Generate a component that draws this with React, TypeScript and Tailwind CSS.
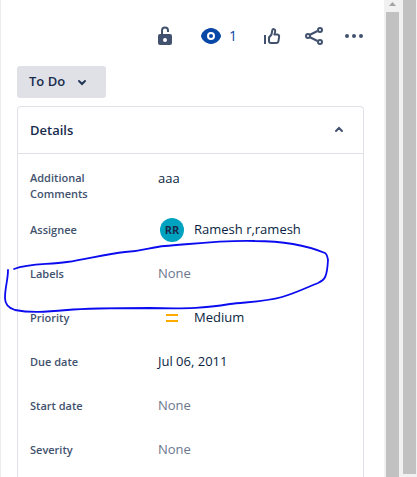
import type { ReactNode } from "react";

const Unlocked = () => (
  <svg viewBox="0 0 24 24" className="size-6 shrink-0" fill="none">
    <path d="M10 11V6.500a3 3 0 0 1 6 0V8" stroke="#42526e" strokeWidth="2" />
    <path
      fillRule="evenodd"
      fill="#42526e"
      d="M8 10h10a2 2 0 0 1 2 2v7a2 2 0 0 1-2 2H8a2 2 0 0 1-2-2v-7a2 2 0 0 1 2-2Zm5 4a2 2 0 1 0 0 4 2 2 0 0 0 0-4Z"
    />
  </svg>
);

const Eye = () => (
  <svg viewBox="0 0 24 24" className="size-6 shrink-0">
    <path d="M12 4C6.500 4 2 9.500 2 12s4.500 8 10 8 10-5.500 10-8-4.500-8-10-8Z" fill="#0747a6" />
    <circle cx="12" cy="12" r="3" fill="none" stroke="#fff" strokeWidth="2" />
  </svg>
);

const ThumbUp = () => (
  <svg viewBox="0 0 24 24" className="size-6" fill="none" stroke="#42526e" strokeWidth="2" strokeLinejoin="round">
    <path d="M5 11v9" />
    <path d="M9 17V13.500L11.500 10.500l.8-4.200c.4-1.800 2.900-1.500 2.900.5 0 1-.3 2.200-.8 3.700H17c1.600 0 2.300 1 2.100 2.400l-.6 4c-.2 1.400-1.100 2.100-2.300 2.100H11c-1.200 0-2-.8-2-2Z" />
  </svg>
);

const Share = () => (
  <svg viewBox="0 0 24 24" className="size-6" fill="none" stroke="#42526e" strokeWidth="2">
    <path d="m7.500 11 8-4M7.500 13l8 4" />
    <circle cx="6" cy="12" r="2" />
    <circle cx="18" cy="6" r="2" />
    <circle cx="18" cy="18" r="2" />
  </svg>
);

const More = () => (
  <svg viewBox="0 0 20 24" className="h-6 w-5" fill="#42526e">
    <circle cx="3" cy="12" r="2" />
    <circle cx="10" cy="12" r="2" />
    <circle cx="17" cy="12" r="2" />
  </svg>
);

const Toolbar = () => (
  <div className="flex items-center justify-end gap-[18px]">
    <button aria-label="Unlocked">
      <Unlocked />
    </button>
    <button aria-label="Watchers" className="flex w-12 items-center justify-center gap-1.5 text-sm text-[#0747a6]">
      <Eye />
      <span>1</span>
    </button>
    <button aria-label="Vote">
      <ThumbUp />
    </button>
    <button aria-label="Share">
      <Share />
    </button>
    <button aria-label="More actions">
      <More />
    </button>
  </div>
);

const Field = ({ label, children }: { label: string; children: ReactNode }) => (
  <div className="flex min-h-9 items-center">
    <dt className="w-32 shrink-0 pr-8 text-[11px] leading-4 font-semibold text-[#42526e]">{label}</dt>
    <dd className="min-w-0 flex-1 self-stretch">{children}</dd>
  </div>
);

const Value = ({ children }: { children: ReactNode }) => (
  <div className="flex h-full items-center">{children}</div>
);

const None = () => (
  <Value>
    <span className="text-[#6b778c]">None</span>
  </Value>
);

const Details = () => (
  <section className="mt-2 flex-1 rounded-t border border-b-0 border-[#dfe1e6]">
    <button className="flex w-full items-center justify-between border-b border-[#dfe1e6] px-3 py-[13px] leading-5">
      <span className="font-semibold">Details</span>
      <svg viewBox="0 0 24 24" className="-my-0.5 size-6" fill="none" stroke="#42526e" strokeWidth="2" strokeLinecap="round">
        <path d="m9 13 3-3 3 3" />
      </svg>
    </button>
    <dl className="flex flex-col gap-2 px-3 pt-3.5 text-[#091e42]">
      <Field label="Additional Comments">
        <div className="leading-5">aaa</div>
      </Field>
      <Field label="Assignee">
        <Value>
          <span className="mr-2.5 ml-0.5 flex size-6 items-center justify-center rounded-full bg-[#00a3bf] text-[11px] font-bold text-[#172b4d]">
            RR
          </span>
          Ramesh r,ramesh
        </Value>
      </Field>
      <Field label="Labels">
        <None />
      </Field>
      <Field label="Priority">
        <Value>
          <svg viewBox="0 0 24 24" className="mr-2.5 ml-0.5 size-6" fill="#ffab00">
            <path d="M6 8h12v2H6zM6 14h12v2H6z" />
          </svg>
          Medium
        </Value>
      </Field>
      <Field label="Due date">
        <Value>Jul 06, 2011</Value>
      </Field>
      <Field label="Start date">
        <None />
      </Field>
      <Field label="Severity">
        <None />
      </Field>
    </dl>
  </section>
);

const Scrollbars = () => (
  <div className="flex shrink-0 bg-[#f1f1f1]" aria-hidden="true">
    <div className="flex w-[17px] flex-col px-0.5">
      <svg viewBox="0 0 13 12" className="h-3 w-[13px]" fill="#a3a3a3">
        <path d="M3 6h7L6.500 2Z" />
      </svg>
      <div className="w-[13px] flex-1 bg-[#c1c1c1]" />
    </div>
    <div className="flex w-4 flex-col pr-px pb-[3px] pl-0.5">
      <div className="flex-1 bg-[#c1c1c1]" />
    </div>
  </div>
);

// hand-drawn loop around the Labels row
const Scribble = () => (
  <svg className="pointer-events-none absolute top-0 left-0 h-[340px] w-[340px]" viewBox="0 0 340 340" fill="none">
    <path
      d="M14 269C30 263 48 265 67 262C88 259 105 254 125 252C145 251 150 247 165 246C192 244 222 240 255 241C288 241 308 246 325 253Q327 254 328 260C327 277 325 280 318 283C308 287 296 293 282 297C265 302 245 302 230 304C205 308 190 309 150 308C110 308 90 308 67 310C45 312 30 313 15 310Q5 307 5 298C5 287 8 280 8 270"
      stroke="#0b0bf0"
      strokeWidth="1.8"
      strokeLinecap="round"
      strokeLinejoin="round"
    />
  </svg>
);

export default function App() {
  return (
    <div className="relative flex h-screen overflow-hidden bg-white font-['Open_Sans','Noto_Sans',sans-serif] text-[13px] text-[#172b4d]">
      <main className="flex min-w-0 flex-1 flex-col border-l border-[#ebecf0] pt-6 pr-5 pl-4">
        <Toolbar />
        <button className="mt-[18px] flex h-8 w-[89px] shrink-0 items-center justify-between self-start rounded-[3px] bg-[#dfe1e6] px-3 font-semibold">
          To Do
          <svg viewBox="0 0 24 24" className="size-6" fill="none" stroke="#253858" strokeWidth="2" strokeLinecap="round">
            <path d="m9 11 3 3 3-3" />
          </svg>
        </button>
        <Details />
      </main>
      <Scrollbars />
      <Scribble />
    </div>
  );
}
